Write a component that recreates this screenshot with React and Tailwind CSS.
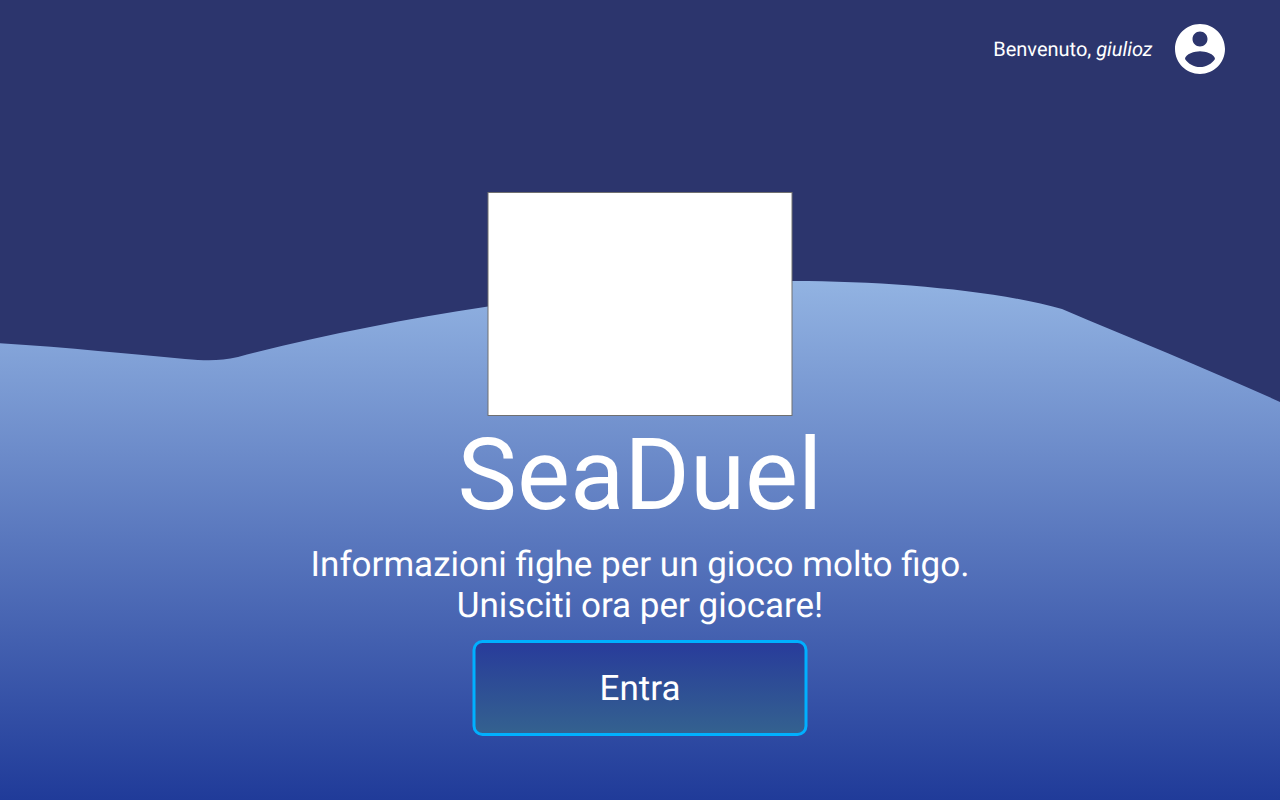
function AccountIcon() {
  return (
    <svg className="size-[60px]" viewBox="0 0 24 24" fill="currentColor" aria-hidden="true">
      <path d="M12 2C6.480 2 2 6.480 2 12s4.480 10 10 10 10-4.480 10-10S17.520 2 12 2zm0 3c1.660 0 3 1.340 3 3s-1.340 3-3 3-3-1.340-3-3 1.340-3 3-3zm0 14.200c-2.500 0-4.710-1.280-6-3.220.030-1.990 4-3.080 6-3.080 1.990 0 5.970 1.090 6 3.080-1.290 1.940-3.500 3.220-6 3.220z" />
    </svg>
  );
}

export default function App() {
  return (
    <div className="relative h-[800px] w-full overflow-hidden bg-[#2c356d] font-['Roboto',sans-serif] text-white">
      <svg className="absolute inset-0" width="1280" height="800" viewBox="0 0 1280 800" aria-hidden="true">
        <defs>
          <linearGradient id="sea" x1="0" y1="281" x2="0" y2="800" gradientUnits="userSpaceOnUse">
            <stop offset="0" stopColor="#92b3e2" />
            <stop offset="1" stopColor="#203b99" />
          </linearGradient>
        </defs>
        <path
          d="M0 343.200C70 347.500 130 354 185 359C207 360.800 220 361 238 357C320 335.500 400 320 488 306.500C590 289 690 281 793 281C890 281 1000 291 1062 309C1135 340 1210 370 1280 402V800H0Z"
          fill="url(#sea)"
        />
      </svg>
      <div className="relative flex h-full flex-col items-center">
        <header className="flex w-full items-center justify-end pt-[19px] pr-[50px]">
          <p className="mr-[17.500px] text-[20px] leading-6 [text-rendering:geometricPrecision]">
            Benvenuto, <em>giulioz</em>
          </p>
          <AccountIcon />
        </header>
        <main className="mt-[113px] flex flex-col items-center">
          <svg width="306" height="224" viewBox="0 0 306 224" aria-hidden="true">
            <rect x="1" y="0.5" width="304" height="223" fill="#fff" stroke="#707070" />
          </svg>
          <h1 className="mt-px text-[100px] leading-[117px] [text-rendering:geometricPrecision]">SeaDuel</h1>
          <p className="mt-2.5 text-center text-[35px] leading-[41px] [text-rendering:geometricPrecision]">
            Informazioni fighe per un gioco molto figo.
            <br />
            Unisciti ora per giocare!
          </p>
          <button className="relative mt-3.5 h-24 w-[336px] text-[35px] [text-rendering:geometricPrecision]">
            <svg className="absolute inset-0" width="336" height="96" viewBox="0 0 336 96" aria-hidden="true">
              <defs>
                <linearGradient id="button" x1="0" y1="0" x2="0" y2="1">
                  <stop offset="0" stopColor="#283b9b" />
                  <stop offset="1" stopColor="#34628f" />
                </linearGradient>
              </defs>
              <rect x="2" y="1.5" width="332" height="93" rx="8.500" fill="url(#button)" stroke="#00b0ff" strokeWidth="3" />
            </svg>
            <span className="relative top-px">Entra</span>
          </button>
        </main>
      </div>
    </div>
  );
}
